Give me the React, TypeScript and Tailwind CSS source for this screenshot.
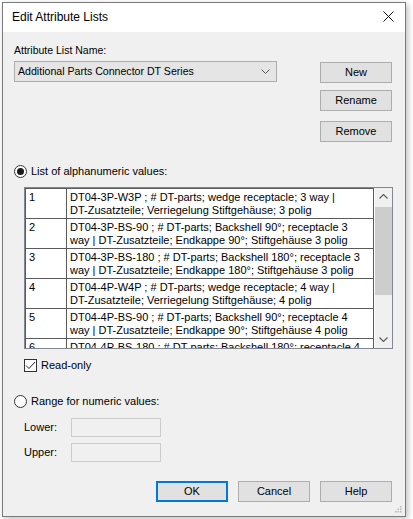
import React from "react";

const rows: [string, string, string][] = [
  ["1", "DT04-3P-W3P ; # DT-parts; wedge receptacle; 3 way |", "DT-Zusatzteile; Verriegelung Stiftgehäuse; 3 polig"],
  ["2", "DT04-3P-BS-90 ; # DT-parts; Backshell 90°; receptacle 3", "way | DT-Zusatzteile; Endkappe 90°; Stiftgehäuse 3 polig"],
  ["3", "DT04-3P-BS-180 ; # DT-parts; Backshell 180°; receptacle 3", "way | DT-Zusatzteile; Endkappe 180°; Stiftgehäuse 3 polig"],
  ["4", "DT04-4P-W4P ; # DT-parts; wedge receptacle; 4 way |", "DT-Zusatzteile; Verriegelung Stiftgehäuse; 4 polig"],
  ["5", "DT04-4P-BS-90 ; # DT-parts; Backshell 90°; receptacle 4", "way | DT-Zusatzteile; Endkappe 90°; Stiftgehäuse 4 polig"],
  ["6", "DT04-4P-BS-180 ; # DT-parts; Backshell 180°; receptacle 4", "way | DT-Zusatzteile; Endkappe 180°; Stiftgehäuse 4 polig"],
];

function WinButton({ label, primary }: { label: string; primary?: boolean }) {
  return (
    <button
      type="button"
      className={
        "flex h-[21px] w-[72px] items-center justify-center bg-[#e1e1e1] text-[11px] leading-none text-black " +
        (primary ? "border-2 border-[#0078d7]" : "border border-[#adadad]")
      }
    >
      {label}
    </button>
  );
}

function Radio({ checked }: { checked?: boolean }) {
  return (
    <span className="flex h-[13px] w-[13px] items-center justify-center rounded-full border border-[#333333] bg-white">
      {checked && <span className="h-[7px] w-[7px] rounded-full bg-[#1a1a1a]" />}
    </span>
  );
}

export default function App() {
  return (
    <div className="h-[519px] w-[413px] overflow-hidden bg-white font-['Liberation_Sans',Arial,sans-serif] text-black">
      <div className="ml-[2px] mt-[2px] flex h-[515px] w-[404px] flex-col border border-[#7a7a7a] shadow-[2px_2px_6px_rgba(0,0,0,0.25)]">
        {/* title bar */}
        <div className="flex h-[29px] items-center justify-between bg-white pb-[2px] pl-[9px] pr-[10px]">
          <span className="text-[12px] leading-4">Edit Attribute Lists</span>
          <svg width="11" height="11" viewBox="0 0 11 11" className="mr-[1px]">
            <path d="M0.5 0.5 L10.5 10.5 M10.5 0.5 L0.5 10.5" stroke="#111" strokeWidth="1" />
          </svg>
        </div>

        <div className="relative flex flex-1 flex-col bg-[#f0f0f0] text-[11px] leading-[13px]">
          {/* name + buttons */}
          <div className="flex">
            <div className="ml-[11px] w-[263px] pt-[12px]">
              <div className="text-[10.5px]">Attribute List Name:</div>
              <div className="mt-[4px] flex h-[21px] items-center justify-between border border-[#adadad] bg-[#e5e5e5] pl-[3px] pr-[6px]">
                <span className="text-[10.6px]">Additional Parts Connector DT Series</span>
                <svg width="9" height="5" viewBox="0 0 9 5">
                  <path d="M0.5 0.5 L4.5 4.5 L8.5 0.5" fill="none" stroke="#555" strokeWidth="1" />
                </svg>
              </div>
            </div>
            <div className="ml-auto mr-[13px] flex flex-col pt-[30px]">
              <WinButton label="New" />
              <div className="mt-[7px]">
                <WinButton label="Rename" />
              </div>
              <div className="mt-[10px]">
                <WinButton label="Remove" />
              </div>
            </div>
          </div>

          {/* list radio */}
          <div className="ml-[11px] mt-[23px] flex items-center gap-[4px]">
            <Radio checked />
            <span>List of alphanumeric values:</span>
          </div>

          {/* list box */}
          <div className="ml-[21px] mt-[9px] flex h-[162px] w-[369px] overflow-hidden border border-[#828790] bg-white">
            <div className="flex-1 overflow-hidden">
              <table className="w-[349px] border-collapse">
                <tbody>
                  {rows.map(([n, a, b]) => (
                    <tr key={n} className="h-[30px]">
                      <td className="w-[41px] border border-[#5a5a5a] pl-[3px] pt-[2px] align-top">{n}</td>
                      <td className="whitespace-nowrap border border-[#5a5a5a] pl-[3px] pt-[2px] align-top">
                        <div>{a}</div>
                        <div>{b}</div>
                      </td>
                    </tr>
                  ))}
                </tbody>
              </table>
            </div>
            <div className="flex w-[17px] flex-col bg-[#f0f0f0]">
              <div className="flex h-[17px] items-center justify-center">
                <svg width="9" height="5" viewBox="0 0 9 5">
                  <path d="M0.5 4.5 L4.5 0.5 L8.5 4.5" fill="none" stroke="#606060" strokeWidth="1.2" />
                </svg>
              </div>
              <div className="mt-[2px] h-[88px] bg-[#cdcdcd]" />
              <div className="flex-1" />
              <div className="flex h-[17px] items-center justify-center">
                <svg width="9" height="5" viewBox="0 0 9 5">
                  <path d="M0.5 0.5 L4.5 4.5 L8.5 0.5" fill="none" stroke="#606060" strokeWidth="1.2" />
                </svg>
              </div>
            </div>
          </div>

          {/* read-only */}
          <div className="ml-[21px] mt-[10px] flex items-center gap-[4px]">
            <span className="flex h-[13px] w-[13px] items-center justify-center border border-[#333333] bg-white">
              <svg width="11" height="9" viewBox="0 0 11 9">
                <path d="M1 4.5 L4 7.5 L10 1" fill="none" stroke="#222" strokeWidth="1" />
              </svg>
            </span>
            <span>Read-only</span>
          </div>

          {/* range radio */}
          <div className="ml-[11px] mt-[23px] flex items-center gap-[4px]">
            <Radio />
            <span>Range for numeric values:</span>
          </div>

          <div className="ml-[21px] mt-[10px] flex flex-col gap-[6px]">
            <div className="flex items-center">
              <span className="w-[47px]">Lower:</span>
              <div className="h-[19px] w-[90px] border border-[#cccccc] bg-[#f0f0f0]" />
            </div>
            <div className="flex items-center">
              <span className="w-[47px]">Upper:</span>
              <div className="h-[19px] w-[90px] border border-[#cccccc] bg-[#f0f0f0]" />
            </div>
          </div>

          {/* bottom buttons */}
          <div className="mr-[13px] mt-[19px] flex justify-end gap-[10px]">
            <WinButton label="OK" primary />
            <WinButton label="Cancel" />
            <WinButton label="Help" />
          </div>

          <svg width="7" height="7" viewBox="0 0 7 7" className="absolute bottom-[3px] right-[3px]">
            <rect x="5" y="0" width="1.5" height="1.5" fill="#b8b8b8" />
            <rect x="2.5" y="2.5" width="1.5" height="1.5" fill="#b8b8b8" />
            <rect x="5" y="2.5" width="1.5" height="1.5" fill="#b8b8b8" />
            <rect x="0" y="5" width="1.5" height="1.5" fill="#b8b8b8" />
            <rect x="2.5" y="5" width="1.5" height="1.5" fill="#b8b8b8" />
            <rect x="5" y="5" width="1.5" height="1.5" fill="#b8b8b8" />
          </svg>
        </div>
      </div>
    </div>
  );
}
